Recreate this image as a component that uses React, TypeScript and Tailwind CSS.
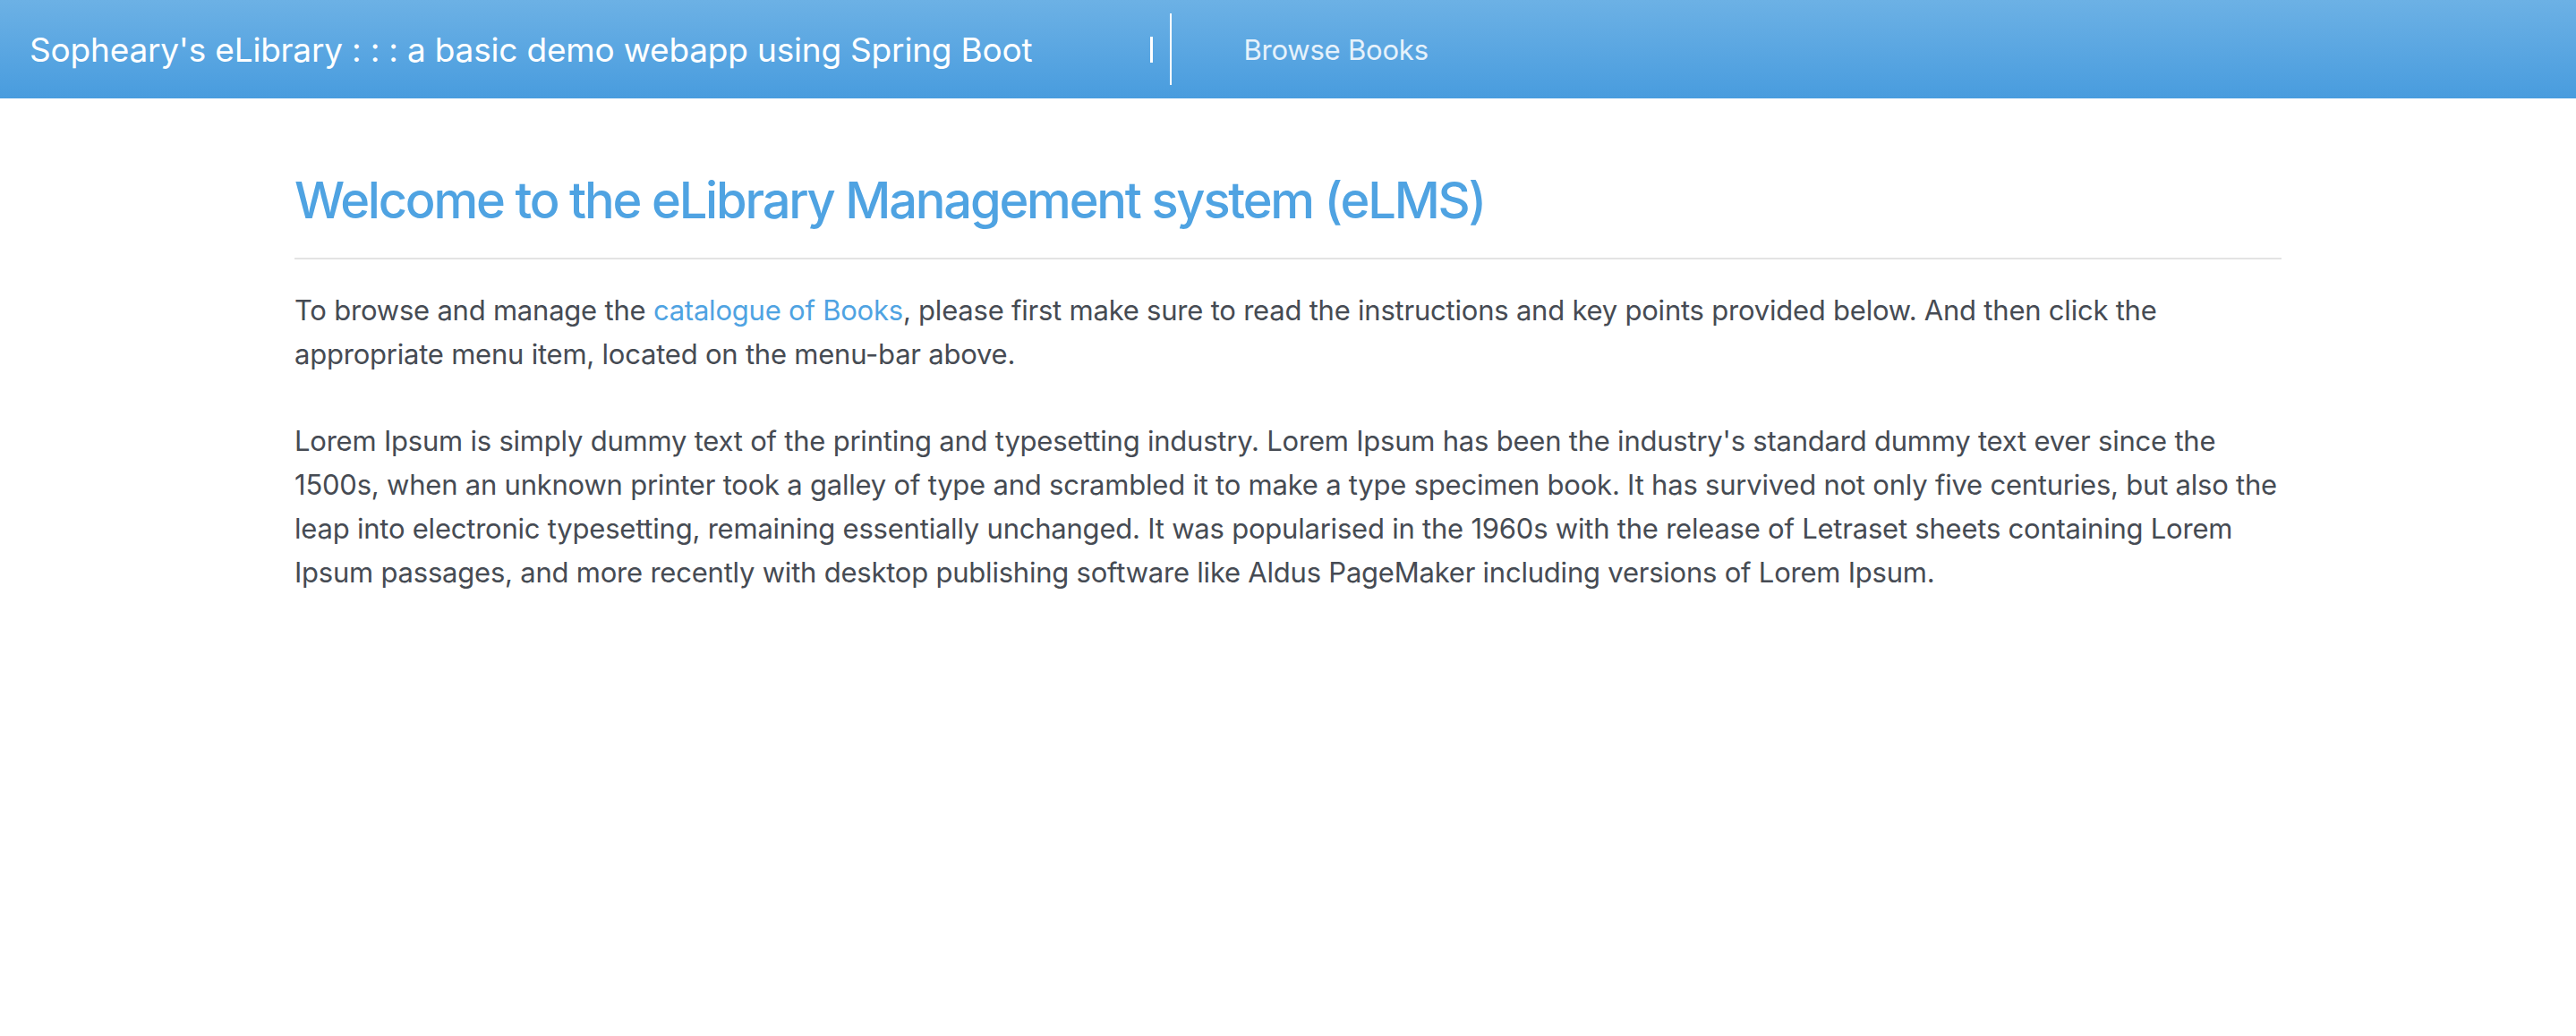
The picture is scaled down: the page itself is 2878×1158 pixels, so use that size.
const FONT = "font-['Inter','Liberation_Sans',sans-serif]";

export default function App() {
  return (
    <div className={`min-h-[1158px] bg-white ${FONT}`}>
      {/* Navbar */}
      <header className="h-[110px] bg-gradient-to-b from-[#6cb1e5] to-[#489cde] flex items-center pl-[33px]">
        <span className="text-white text-[37px] leading-none tracking-[-0.2px] whitespace-nowrap">
          Sopheary's eLibrary : : : a basic demo webapp using Spring Boot
        </span>
        <div className="ml-[132px] flex items-center">
          <span className="w-[3px] h-[29px] bg-white" />
          <span className="ml-[19px] w-[2px] h-[80px] bg-white" />
          <a href="#" className="ml-[80px] text-[31px] leading-none tracking-[-0.2px] text-white/85 whitespace-nowrap">
            Browse Books
          </a>
        </div>
      </header>

      {/* Content */}
      <main className="max-w-[2280px] mx-auto px-[30px]">
        <h2 className="mt-[81px] text-[56px] leading-[1.2] font-medium text-[#4fa3e2] tracking-[-2.2px]">
          Welcome to the eLibrary Management system (eLMS)
        </h2>
        <hr className="mt-[30px] border-0 h-[2px] bg-[#e3e3e3]" />
        <p className="mt-[32px] text-[31px] leading-[49px] tracking-[-0.22px] text-[#464b53]">
          To browse and manage the <a href="#" className="text-[#4fa3e2]">catalogue of Books</a>, please first
          make sure to read the instructions and key points provided below. And then click the appropriate menu
          item, located on the menu-bar above.
        </p>
        <p className="mt-[48px] text-[31px] leading-[49px] tracking-[-0.22px] text-[#464b53]">
          Lorem Ipsum is simply dummy text of the printing and typesetting industry. Lorem Ipsum has been the
          industry's standard dummy text ever since the 1500s, when an unknown printer took a galley of type and
          scrambled it to make a type specimen book. It has survived not only five centuries, but also the leap
          into electronic typesetting, remaining essentially unchanged. It was popularised in the 1960s with the
          release of Letraset sheets containing Lorem Ipsum passages, and more recently with desktop publishing
          software like Aldus PageMaker including versions of Lorem Ipsum.
        </p>
      </main>
    </div>
  );
}
